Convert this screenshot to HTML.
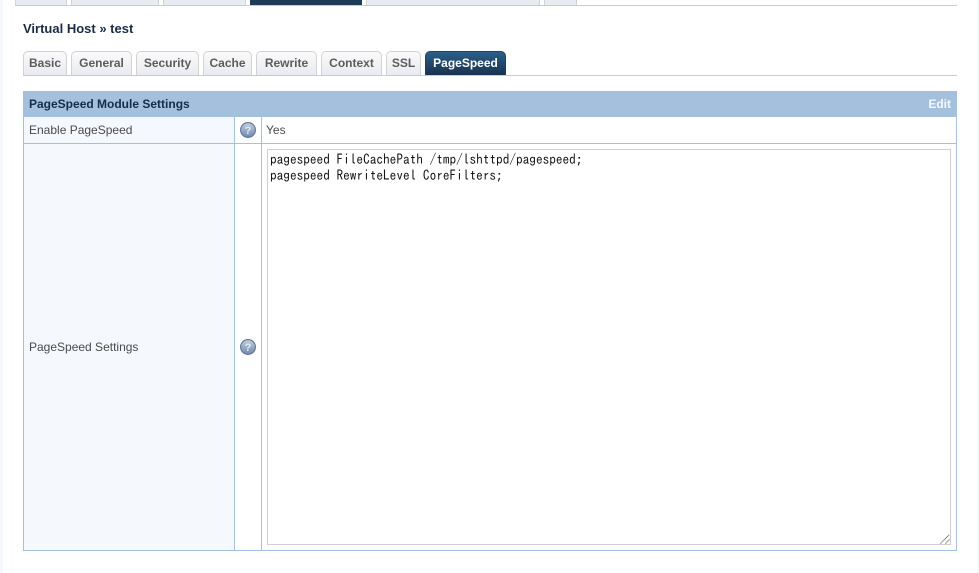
<!DOCTYPE html>
<html>
<head>
<meta charset="utf-8">
<style>
html,body{margin:0;padding:0;background:#fff;}
body{width:979px;height:573px;position:relative;overflow:hidden;font-family:"Liberation Sans",sans-serif;}
.a{position:absolute;box-sizing:border-box;}
.top{top:-3px;height:8px;background:#e9ebf2;border:1px solid #d4d4d4;border-bottom:0;}
.t{top:51px;height:24px;border:1px solid #d2d2d2;border-bottom:0;border-radius:5px 5px 0 0;background:linear-gradient(#fafafa,#e9ebf1);color:#5c5c5c;font-weight:bold;font-size:12px;line-height:23px;text-align:center;white-space:nowrap;}
.on{background:linear-gradient(#2a6088,#1b324f);border-color:#25405e;color:#fff;}
.lb{font-size:12px;color:#4a4a4a;white-space:nowrap;}
</style>
</head>
<body>
<div class="a" style="left:0;top:0;width:3px;height:573px;background:#f5f9fd"></div>
<div class="a" style="left:977px;top:0;width:2px;height:573px;background:#f5f9fd"></div>

<div class="a top" style="left:15px;width:52px"></div>
<div class="a top" style="left:71px;width:88px"></div>
<div class="a top" style="left:163px;width:83px"></div>
<div class="a top" style="left:250px;width:112px;background:#1f3a58;border-color:#1f3a58"></div>
<div class="a top" style="left:366px;width:174px"></div>
<div class="a top" style="left:544px;width:33px"></div>
<div class="a" style="left:15px;top:5px;width:942px;height:1px;background:#cbcbcb"></div>

<div class="a" style="left:23px;top:21px;font-size:13px;font-weight:bold;line-height:15px;color:#1b2b44;white-space:nowrap">Virtual Host » test</div>

<div class="a t" style="left:23px;width:44px">Basic</div>
<div class="a t" style="left:71px;width:61px">General</div>
<div class="a t" style="left:136px;width:63px">Security</div>
<div class="a t" style="left:203px;width:49px">Cache</div>
<div class="a t" style="left:256px;width:61px">Rewrite</div>
<div class="a t" style="left:321px;width:61px">Context</div>
<div class="a t" style="left:386px;width:35px">SSL</div>
<div class="a t on" style="left:425px;width:81px">PageSpeed</div>
<div class="a" style="left:23px;top:75px;width:934px;height:1px;background:#cbcbcb"></div>

<div class="a" style="left:23px;top:91px;width:934px;height:26px;background:#a5c0dd"></div>
<div class="a" style="left:29px;top:96px;font-size:12px;font-weight:bold;line-height:16px;color:#152c4b;white-space:nowrap">PageSpeed Module Settings</div>
<div class="a" style="right:28px;top:96px;font-size:12px;font-weight:bold;line-height:16px;color:#f4f8fc">Edit</div>

<div class="a" style="left:23px;top:117px;width:934px;height:434px;border:1px solid #a5c0dd;border-top:0"></div>
<div class="a" style="left:24px;top:117px;width:210px;height:433px;background:#f5f8fc"></div>
<div class="a" style="left:24px;top:143px;width:932px;height:1px;background:#a5c0dd"></div>
<div class="a" style="left:234px;top:117px;width:1px;height:433px;background:#a5c0dd"></div>
<div class="a" style="left:261px;top:117px;width:1px;height:433px;background:#a5c0dd"></div>

<div class="a lb" style="left:29px;top:122px;line-height:16px">Enable PageSpeed</div>
<div class="a lb" style="left:266px;top:122px;line-height:16px">Yes</div>
<div class="a lb" style="left:29px;top:339px;line-height:16px">PageSpeed Settings</div>

<svg class="a" style="left:240px;top:122px" width="16" height="16" viewBox="0 0 16 16">
<defs><linearGradient id="g" x1="0" y1="0" x2="0" y2="1"><stop offset="0" stop-color="#c3cfde"/><stop offset="1" stop-color="#6f8bb0"/></linearGradient></defs>
<circle cx="8" cy="8" r="7.4" fill="url(#g)" stroke="#5f7290" stroke-width="1.1"/>
<text x="8" y="12" font-family="Liberation Sans" font-size="11" font-weight="bold" fill="#e4eaf2" text-anchor="middle">?</text>
</svg>
<svg class="a" style="left:240px;top:339px" width="16" height="16" viewBox="0 0 16 16">
<circle cx="8" cy="8" r="7.4" fill="url(#g)" stroke="#5f7290" stroke-width="1.1"/>
<text x="8" y="12" font-family="Liberation Sans" font-size="11" font-weight="bold" fill="#e4eaf2" text-anchor="middle">?</text>
</svg>

<div class="a" style="left:267px;top:149px;width:684px;height:396px;border:1px solid #cfcfcf;background:#fff"></div>
<div class="a" style="left:270px;top:151px;font-family:'IPAGothic','Liberation Mono',monospace;font-size:13.3px;line-height:16px;color:#111;white-space:pre">pagespeed FileCachePath /tmp/lshttpd/pagespeed;
pagespeed RewriteLevel CoreFilters;</div>
<svg class="a" style="left:939px;top:533px" width="12" height="12" viewBox="0 0 12 12">
<path d="M1.5 10.5L10.5 1.5M6.5 10.5L10.5 6.5" stroke="#555" stroke-width="1" stroke-dasharray="1 .6" fill="none"/>
</svg>
</body>
</html>
